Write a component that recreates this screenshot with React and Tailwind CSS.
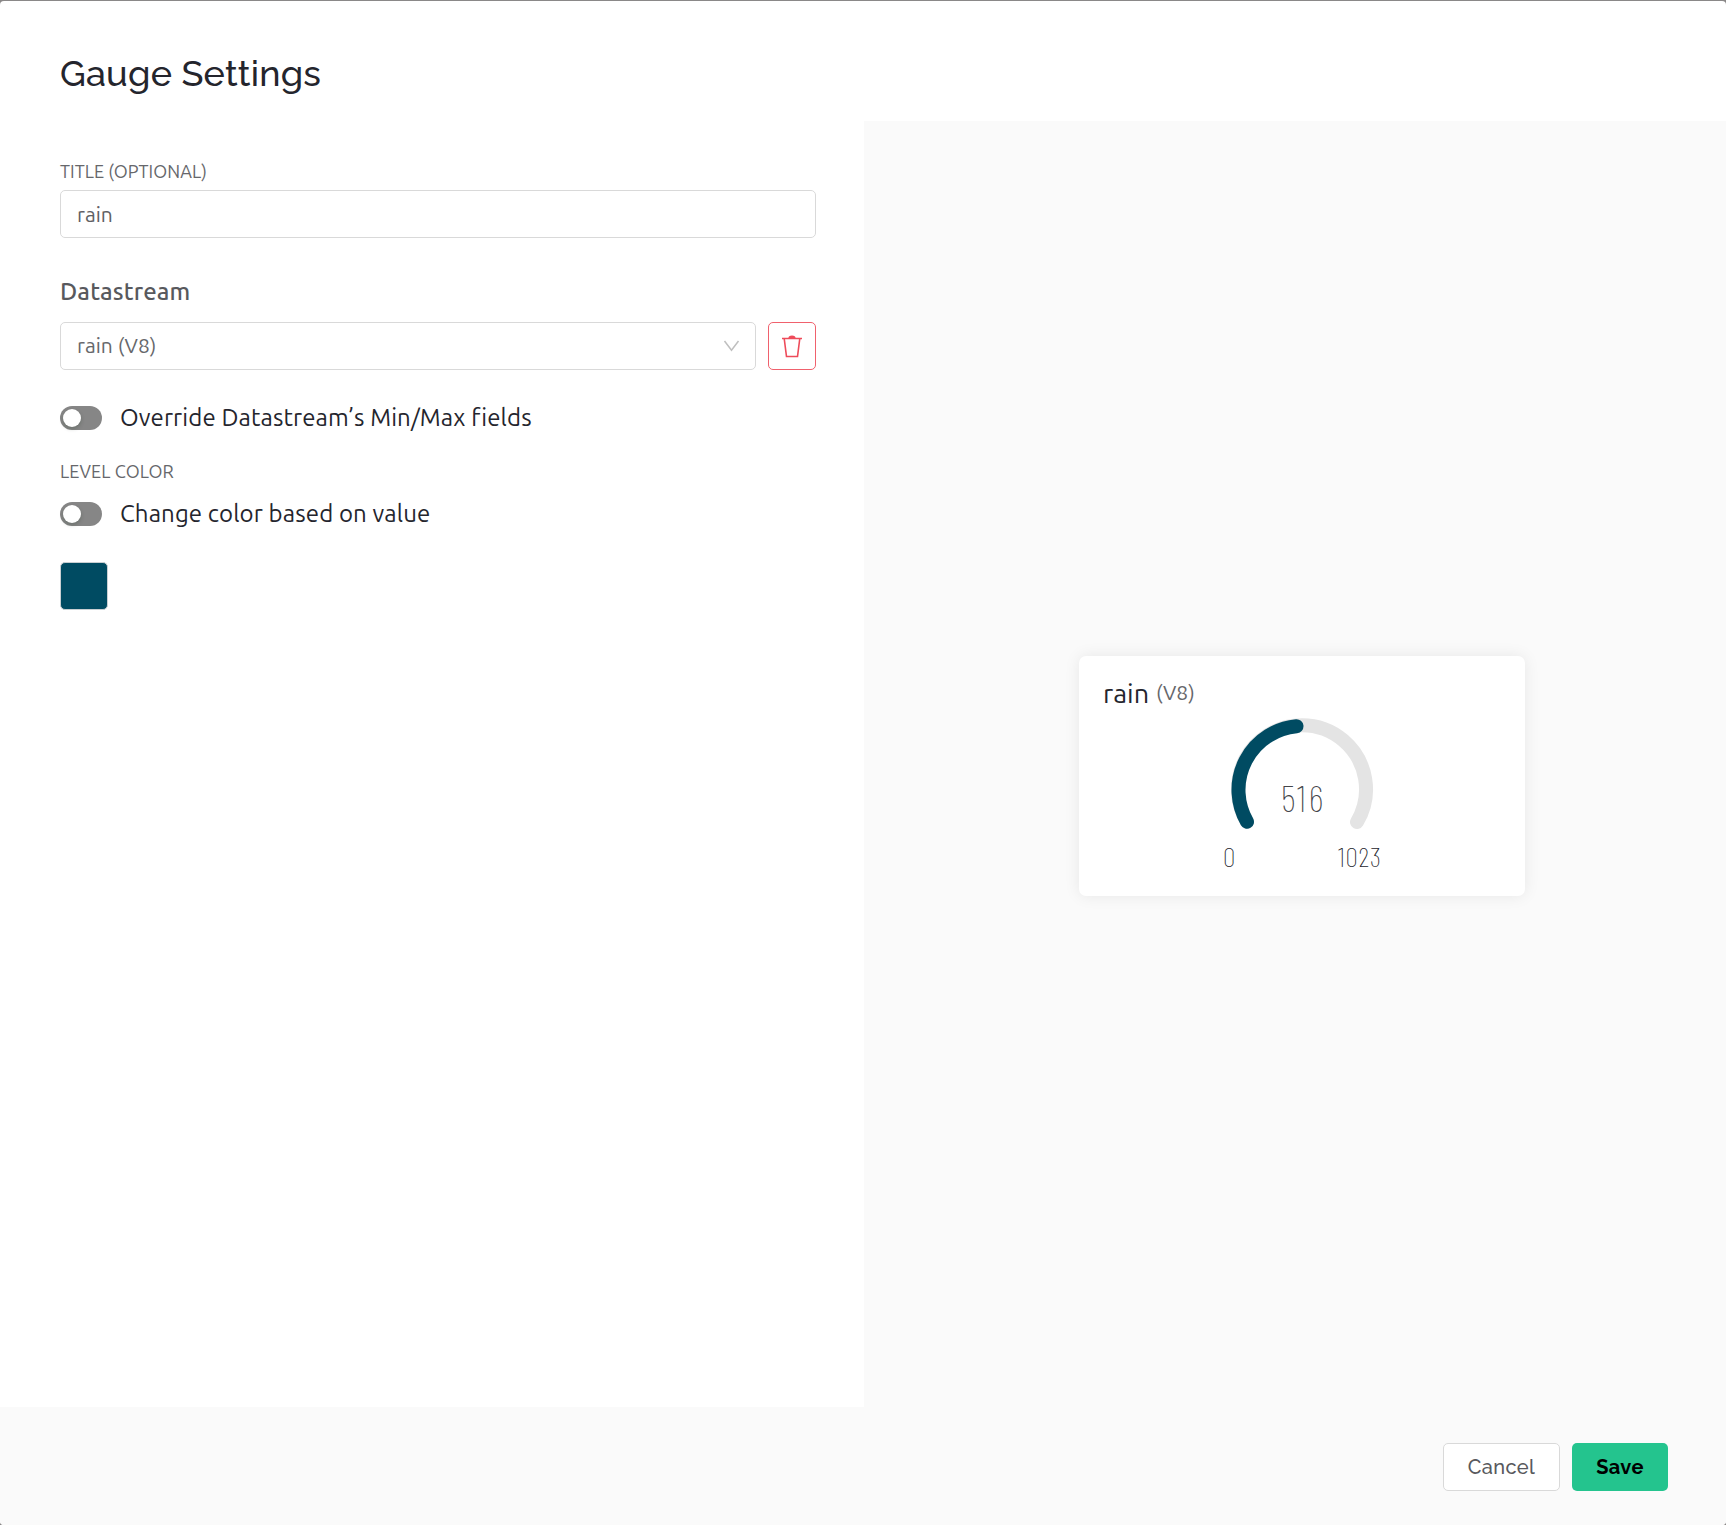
import React from "react";

const ubuntu = "font-['Ubuntu','Noto_Sans',sans-serif]";
const raleway = "font-['Raleway','Lato',sans-serif]";
const condensed = "font-['Barlow_Condensed','Roboto_Condensed','Roboto',sans-serif]";

function Toggle({ label }) {
  return (
    <div className="flex h-8 items-center">
      <button
        type="button"
        role="switch"
        aria-checked="false"
        className="flex h-6 w-[42px] shrink-0 items-center rounded-full bg-[#868686] px-[3px]"
      >
        <span className="size-[18px] rounded-full bg-white shadow-[0_2px_4px_rgba(0,35,11,0.2)]" />
      </button>
      <span className="-mt-px ml-[18px] text-[24px] leading-8 tracking-[0.12px] whitespace-nowrap text-[#24252d]">
        {label}
      </span>
    </div>
  );
}

function Gauge() {
  return (
    <svg width="144" height="118" viewBox="-72 -72 144 118" fill="none" strokeWidth="14" strokeLinecap="round">
      <path d="M-55 32A64 64 0 1 1 55 32" stroke="#e4e4e4" />
      <path d="M-55 31.8A64 64 0 0 1 -5.5 -63.8" stroke="#004b62" />
    </svg>
  );
}

export default function App() {
  return (
    <div className={`h-[1525px] w-[1726px] overflow-hidden bg-[#8a8888] pt-px ${ubuntu}`}>
      <div className="flex h-[1524px] flex-col overflow-hidden rounded-[4px] bg-white">
        <header className="h-[120px] shrink-0 pt-12 pl-[60px]">
          <h1 className={`w-max text-[36px] leading-[48px] font-medium tracking-[0.22px] text-[#24252d] ${raleway}`}>
            Gauge Settings
          </h1>
        </header>

        <main className="flex h-[1286px] shrink-0">
          <section className="w-[864px] pt-[39px] pr-12 pl-[60px]">
            <label className="block h-[30px] -translate-y-px text-[18px] leading-6 tracking-[0.05px] text-[#66676b]">TITLE (OPTIONAL)</label>
            <input
              readOnly
              value="rain"
              className="block h-12 w-full rounded-[5px] border border-[#d9d9d9] px-4 text-[21px] text-[#5f6064] outline-none"
            />

            <h2 className="mt-[37px] h-[47px] translate-y-px text-[24px] leading-8 font-medium tracking-[0.15px] text-[#58595d]">Datastream</h2>
            <div className="flex gap-3">
              <div className="flex h-12 flex-1 items-center justify-between rounded-[5px] border border-[#d9d9d9] px-4 pr-[15px] text-[21px] text-[#66676b]">
                <span>rain (V8)</span>
                <svg width="17" height="12" viewBox="0 0 17 12" fill="none" stroke="#bfbfbf" strokeWidth="1.5">
                  <path d="M1.5 1L8.5 10.3L15.5 1" />
                </svg>
              </div>
              <button type="button" className="flex size-12 items-center justify-center rounded-[5px] border border-[#f0616d]">
                <svg width="22" height="24" viewBox="0 0 22 24" fill="none" stroke="#ee4b5a" strokeWidth="1.6">
                  <path d="M1 4.5H21M3.2 4.5L5.5 22.5H16.5L18.8 4.5" />
                  <path d="M8.2 4.2C8.2 1.6 13.8 1.6 13.8 4.2Z" fill="#ee4b5a" />
                </svg>
              </button>
            </div>

            <div className="mt-8">
              <Toggle label="Override Datastream’s Min/Max fields" />
            </div>
            <div className="mt-[26px] h-6 -translate-y-px text-[18px] leading-6 tracking-[0.1px] text-[#66676b]">LEVEL COLOR</div>
            <div className="mt-[14px]">
              <Toggle label="Change color based on value" />
            </div>
            <div className="mt-8 size-12 rounded-[5px] border border-[#c9cfd2] bg-[#004b62]" />
          </section>

          <section className="flex flex-1 items-center justify-center bg-[#fafafa] pt-6 pl-[14px]">
            <div className="flex h-60 w-[446px] flex-col rounded-[7px] bg-white shadow-[0_0_16px_rgba(0,0,0,0.08)]">
              <div className="flex h-[62px] shrink-0 items-start pt-[17px] pl-6">
                <span className="text-[27px] leading-10 text-[#24252d]">rain</span>
                <span className="ml-[7px] text-[21px] leading-[39px] text-[#66676b]">(V8)</span>
              </div>
              <div className="relative flex h-[118px] shrink-0 justify-center">
                <Gauge />
                <span className={`absolute inset-x-0 top-[59px] pl-[3px] text-center text-[37px] leading-10 font-extralight tracking-[2.8px] text-[#45464a] ${condensed}`}>
                  516
                </span>
              </div>
              <div className={`flex pt-1 text-[28px] leading-8 font-extralight tracking-[0.8px] text-[#24252d] ${condensed}`}>
                <span className="ml-[144px] w-3">0</span>
                <span className="ml-[103px]">1023</span>
              </div>
            </div>
          </section>
        </main>

        <footer className={`flex flex-1 justify-end gap-3 bg-[#fafafa] pt-9 pr-[58px] text-[20px] tracking-[0.4px] ${raleway}`}>
          <button type="button" className="h-12 w-[117px] rounded-[5px] border border-[#d9d9d9] bg-white font-medium text-[#58595d]">
            Cancel
          </button>
          <button type="button" className="h-12 w-24 rounded-[5px] bg-[#24c48e] font-bold text-black">
            Save
          </button>
        </footer>
      </div>
    </div>
  );
}
